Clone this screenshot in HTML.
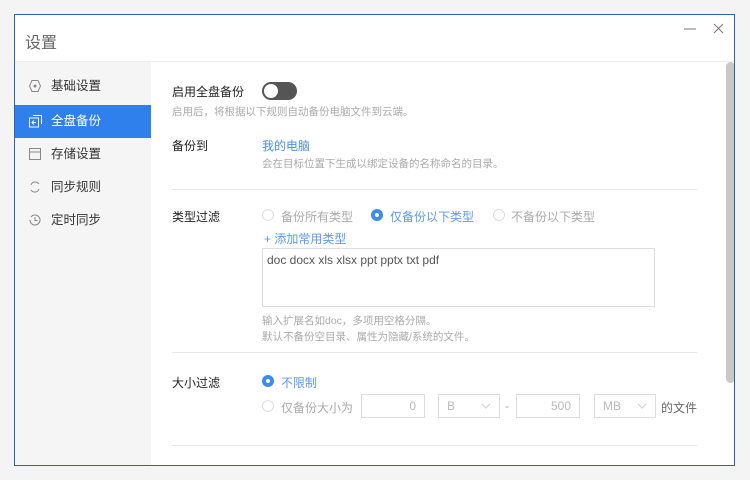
<!DOCTYPE html>
<html><head><meta charset="utf-8"><style>
*{margin:0;padding:0;box-sizing:border-box}
body{width:750px;height:480px;background:#f4f4f4;position:relative;overflow:hidden;font-family:"Liberation Sans","Noto Sans CJK SC",sans-serif;font-size:12px;color:#333}
.a{position:absolute;white-space:nowrap}
.win{position:absolute;left:14px;top:14px;width:721px;height:452px;border:1px solid #2b63b8;background:#fff;overflow:hidden}
.side{position:absolute;left:0;top:47px;width:136px;height:405px;background:#f5f5f5}
.nav{position:absolute;left:0;width:136px;height:33px;line-height:33px;padding-left:36px;font-size:12.5px;color:#333}
.nav.on{background:#2f80ed;color:#fff}
.nav svg{position:absolute;left:14px;top:10px}
.g{color:#aaa;font-size:10.5px}
.lbl{font-size:12px;color:#222}
.hr{position:absolute;left:172px;width:525px;height:1px;background:#e8e8e8}
.rad{position:absolute;width:12px;height:12px;border-radius:50%;border:1px solid #ddd;background:#fff}
.rad.on{border:none;background:#3c8cf0}
.rad.on:after{content:"";position:absolute;left:4px;top:4px;width:4px;height:4px;border-radius:50%;background:#fff}
.box{position:absolute;border:1px solid #ddd;height:24px;color:#bbb;font-size:12px;line-height:22px}
</style></head><body>
<div class="win">
<div class="a" style="left:10px;top:14px;font-size:16px;color:#666">设置</div>
<svg class="a" style="left:668px;top:8px" width="14" height="10"><path d="M1 6H13" stroke="#777" stroke-width="1"/></svg>
<svg class="a" style="left:698px;top:8px" width="11" height="11"><path d="M1 1L10 10M10 1L1 10" stroke="#777" stroke-width="1"/></svg>
<div class="a" style="left:0;top:46px;width:721px;height:1px;background:#eee"></div>
<div class="side">
<div class="nav" style="top:8px"><svg width="12" height="12" viewBox="0 0 12 12"><polygon points="3,0.5 9,0.5 11.5,6 9,11.5 3,11.5 0.5,6" fill="none" stroke="#888"/><circle cx="6" cy="6" r="1.5" fill="#888"/></svg>基础设置</div>
<div class="nav on" style="top:43px"><svg width="13" height="13" viewBox="0 0 13 13"><rect x="0.5" y="3" width="9" height="9" fill="none" stroke="#fff"/><path d="M4 .5H12.5V9" fill="none" stroke="#fff"/><path d="M7 7.5H3M5 5.5L3 7.5 5 9.5" fill="none" stroke="#fff"/></svg>全盘备份</div>
<div class="nav" style="top:76px"><svg width="12" height="12" viewBox="0 0 12 12"><rect x="0.5" y="0.5" width="11" height="11" fill="none" stroke="#888"/><path d="M0.5 4H11.5" stroke="#888"/></svg>存储设置</div>
<div class="nav" style="top:109px"><svg width="12" height="12" viewBox="0 0 12 12"><path d="M2 4A4.5 4.5 0 0 1 10 3M10 8A4.5 4.5 0 0 1 2 9" fill="none" stroke="#888"/></svg>同步规则</div>
<div class="nav" style="top:142px"><svg width="12" height="12" viewBox="0 0 12 12"><path d="M2 3A5 5 0 1 1 1 6" fill="none" stroke="#888"/><path d="M6 3V6.5H8.5" fill="none" stroke="#888"/></svg>定时同步</div>
</div>
<div class="a" style="left:711px;top:47px;width:9px;height:321px;border-radius:5px;background:#c8c8c8"></div>
</div>
<div class="a lbl" style="left:172px;top:83px">启用全盘备份</div>
<div class="a" style="left:262px;top:82px;width:35px;height:18px;border-radius:9px;background:#555"></div>
<div class="a" style="left:264px;top:84px;width:14px;height:14px;border-radius:50%;background:#fff"></div>
<div class="a g" style="left:172px;top:104px">启用后，将根据以下规则自动备份电脑文件到云端。</div>
<div class="a lbl" style="left:172px;top:137px">备份到</div>
<div class="a" style="left:262px;top:137px;color:#4a8fe6">我的电脑</div>
<div class="a g" style="left:262px;top:156px">会在目标位置下生成以绑定设备的名称命名的目录。</div>
<div class="hr" style="top:189px"></div>
<div class="a lbl" style="left:172px;top:208px">类型过滤</div>
<div class="rad" style="left:262px;top:209px"></div><div class="a" style="left:281px;top:208px;color:#aaa">备份所有类型</div>
<div class="rad on" style="left:371px;top:209px"></div><div class="a" style="left:390px;top:208px;color:#5b9bf0">仅备份以下类型</div>
<div class="rad" style="left:493px;top:209px"></div><div class="a" style="left:511px;top:208px;color:#aaa">不备份以下类型</div>
<div class="a" style="left:264px;top:230px;color:#5b9bf0">+ 添加常用类型</div>
<div class="a" style="left:262px;top:248px;width:393px;height:59px;border:1px solid #ddd"></div>
<div class="a" style="left:267px;top:253px;color:#555">doc docx xls xlsx ppt pptx txt pdf</div>
<div class="a g" style="left:262px;top:313px">输入扩展名如doc，多项用空格分隔。</div>
<div class="a g" style="left:262px;top:329px">默认不备份空目录、属性为隐藏/系统的文件。</div>
<div class="hr" style="top:352px"></div>
<div class="a lbl" style="left:172px;top:374px">大小过滤</div>
<div class="rad on" style="left:262px;top:375px"></div><div class="a" style="left:281px;top:374px;color:#5b9bf0">不限制</div>
<div class="rad" style="left:262px;top:400px"></div><div class="a" style="left:281px;top:399px;color:#aaa">仅备份大小为</div>
<div class="box" style="left:361px;top:394px;width:64px;text-align:right;padding-right:8px">0</div>
<div class="box" style="left:438px;top:394px;width:62px;padding-left:8px">B<svg style="position:absolute;right:8px;top:8px" width="10" height="6"><path d="M1 1L5 5 9 1" fill="none" stroke="#ccc"/></svg></div>
<div class="a" style="left:505px;top:399px;color:#aaa">-</div>
<div class="box" style="left:516px;top:394px;width:64px;text-align:right;padding-right:8px">500</div>
<div class="box" style="left:594px;top:394px;width:62px;padding-left:8px">MB<svg style="position:absolute;right:8px;top:8px" width="10" height="6"><path d="M1 1L5 5 9 1" fill="none" stroke="#ccc"/></svg></div>
<div class="a" style="left:661px;top:399px;color:#666">的文件</div>
<div class="hr" style="top:445px"></div>
</body></html>
